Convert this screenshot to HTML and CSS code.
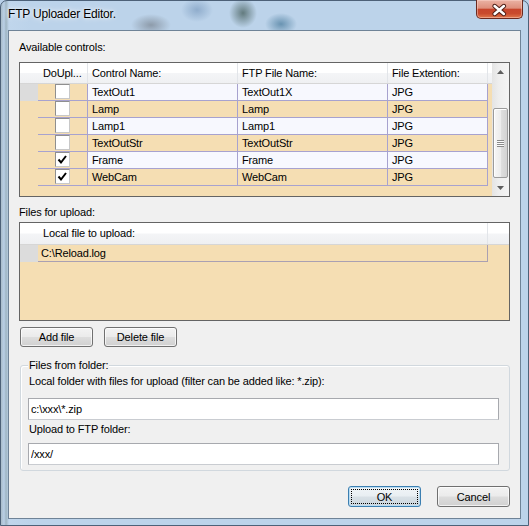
FILE: index.html
```html
<!DOCTYPE html>
<html>
<head>
<meta charset="utf-8">
<link rel="stylesheet" href="styles.css">
</head>
<body>
<div class="window">
  <div class="titlebar">
    <span class="title">FTP Uploader Editor.</span>
    <div class="close">
      <svg width="47" height="19" viewBox="0 0 47 19">
        <path d="M19 6 L28.5 14 M28.5 6 L19 14" stroke="#4b1d15" stroke-width="4.6" stroke-linecap="round"/>
        <path d="M19 6 L28.5 14 M28.5 6 L19 14" stroke="#ffffff" stroke-width="2.6" stroke-linecap="round"/>
      </svg>
    </div>
  </div>
  <div class="client">
    <div class="label lbl-top">Available controls:</div>
    <div class="grid grid1">
      <div class="grid-main">
        <div class="hdr">
          <div class="hc rh"></div>
          <div class="hc w-chk">DoUpl...</div>
          <div class="hc w-name">Control Name:</div>
          <div class="hc w-ftp">FTP File Name:</div>
          <div class="hc w-ext">File Extention:</div>
          <div class="hc fill"></div>
        </div>
        <div class="row light">
          <div class="rh cur"></div>
          <div class="cell chk w-chk"><div class="cb"></div></div>
          <div class="cell w-name">TextOut1</div>
          <div class="cell w-ftp">TextOut1X</div>
          <div class="cell w-ext">JPG</div>
        </div>
        <div class="row tan">
          <div class="rh"></div>
          <div class="cell chk w-chk"><div class="cb"></div></div>
          <div class="cell w-name">Lamp</div>
          <div class="cell w-ftp">Lamp</div>
          <div class="cell w-ext">JPG</div>
        </div>
        <div class="row light">
          <div class="rh"></div>
          <div class="cell chk w-chk"><div class="cb"></div></div>
          <div class="cell w-name">Lamp1</div>
          <div class="cell w-ftp">Lamp1</div>
          <div class="cell w-ext">JPG</div>
        </div>
        <div class="row tan">
          <div class="rh"></div>
          <div class="cell chk w-chk"><div class="cb"></div></div>
          <div class="cell w-name">TextOutStr</div>
          <div class="cell w-ftp">TextOutStr</div>
          <div class="cell w-ext">JPG</div>
        </div>
        <div class="row light">
          <div class="rh"></div>
          <div class="cell chk w-chk"><div class="cb"><svg width="13" height="13" viewBox="0 0 13 13"><path d="M2.5 6.5 L5 9.5 L10 3" fill="none" stroke="#000" stroke-width="2"/></svg></div></div>
          <div class="cell w-name">Frame</div>
          <div class="cell w-ftp">Frame</div>
          <div class="cell w-ext">JPG</div>
        </div>
        <div class="row tan">
          <div class="rh"></div>
          <div class="cell chk w-chk"><div class="cb"><svg width="13" height="13" viewBox="0 0 13 13"><path d="M2.5 6.5 L5 9.5 L10 3" fill="none" stroke="#000" stroke-width="2"/></svg></div></div>
          <div class="cell w-name">WebCam</div>
          <div class="cell w-ftp">WebCam</div>
          <div class="cell w-ext">JPG</div>
        </div>
      </div>
      <div class="vscroll">
        <div class="sb-btn"><svg width="7" height="4" viewBox="0 0 7 4"><path d="M0 4 L3.5 0 L7 4 Z" fill="#5e5e5e"/></svg></div>
        <div class="sb-track">
          <div class="thumb"><div class="grip"></div></div>
        </div>
        <div class="sb-btn"><svg width="7" height="4" viewBox="0 0 7 4"><path d="M0 0 L7 0 L3.5 4 Z" fill="#5e5e5e"/></svg></div>
      </div>
    </div>

    <div class="label lbl-files">Files for upload:</div>
    <div class="grid grid2">
      <div class="grid-main">
        <div class="hdr hdr2">
          <div class="hc rh"></div>
          <div class="hc w-file">Local file to upload:</div>
          <div class="hc fill"></div>
        </div>
        <div class="row">
          <div class="rh cur"></div>
          <div class="cell cell2 w-file">C:\Reload.log</div>
        </div>
      </div>
    </div>

    <div class="btnrow">
      <button class="btn btn-add">Add file</button>
      <button class="btn">Delete file</button>
    </div>

    <div class="group">
      <span class="legend">Files from folder:</span>
      <div class="label lbl-local">Local folder with files for upload (filter can be added like: *.zip):</div>
      <input class="tb tb1" type="text" value="c:\xxx\*.zip">
      <div class="label lbl-ftp">Upload to FTP folder:</div>
      <input class="tb tb2" type="text" value="/xxx/">
    </div>

    <div class="okrow">
      <button class="btn btn-ok">OK</button>
      <button class="btn">Cancel</button>
    </div>
  </div>
</div>
</body>
</html>
```

FILE: styles.css
```css
* { box-sizing: border-box; }

body {
  margin: 0;
  width: 529px;
  height: 526px;
  overflow: hidden;
  font-family: "Liberation Sans", Arial, sans-serif;
  font-size: 11px;
  letter-spacing: -0.14px;
  color: #000;
  background: #b9d0e8;
}

.window {
  width: 529px;
  height: 526px;
  display: flex;
  flex-direction: column;
  padding: 0 7px 6px 7px;
  border: 1px solid #4d6178;
  border-radius: 7px 7px 0 0;
  background:
    radial-gradient(ellipse 20px 11px at 150px 24px, rgba(110,118,128,0.6), rgba(110,118,128,0) 100%),
    radial-gradient(ellipse 16px 12px at 196px 9px, rgba(100,135,175,0.5), rgba(100,135,175,0) 100%),
    radial-gradient(ellipse 14px 15px at 242px 12px, rgba(60,85,80,0.7), rgba(60,85,80,0) 100%),
    radial-gradient(ellipse 16px 11px at 280px 23px, rgba(50,105,140,0.6), rgba(50,105,140,0) 100%),
    linear-gradient(90deg, #a9bcc9 0px, #b9cfe6 3px, #9fb5c3 5px, #c0d6ec 8px, #bcd3ea 30px, #bcd3ea 100%);
}

.titlebar {
  height: 29px;
  flex: none;
  display: flex;
  justify-content: space-between;
  align-items: flex-start;
}

.title {
  padding-top: 6px;
  font-size: 12px;
  letter-spacing: -0.2px;
  line-height: 15px;
  text-shadow: 0 0 6px rgba(255,255,255,0.95), 0 0 3px rgba(255,255,255,0.9);
}

.close {
  width: 47px;
  height: 19px;
  margin-top: -1px;
  margin-right: -2px;
  border: 1px solid #6b2a20;
  border-top: none;
  border-radius: 0 0 5px 5px;
  background: linear-gradient(180deg, #eab2a4 0%, #de8f7c 45%, #c7452c 52%, #c94a2d 75%, #e0774b 100%);
  box-shadow: inset 0 0 0 1px rgba(255,220,210,0.45);
  display: flex;
}

.close svg { display: block; margin-left: -1px; }

.client {
  flex: 1;
  display: flex;
  flex-direction: column;
  padding: 0 10px;
  background: #f0f0f0;
  border: 1px solid #6f8397;
}

.label {
  line-height: 13px;
  white-space: nowrap;
}

.lbl-top { margin-top: 10px; }
.lbl-files { margin-top: 9px; }

/* data grids */
.grid {
  display: flex;
  border: 1px solid #646464;
  background: #f5deb3;
  flex: none;
}

.grid1 { height: 135px; margin-top: 8px; }
.grid2 { height: 99px; margin-top: 3px; }

.grid-main {
  flex: 1;
  min-width: 0;
  display: flex;
  flex-direction: column;
}

.hdr {
  display: flex;
  height: 21px;
  flex: none;
  background: linear-gradient(180deg, #ffffff 0%, #ffffff 48%, #f4f5f7 52%, #eff0f2 100%);
  border-bottom: 1px solid #d6d6d6;
}

.hdr2 { height: 22px; }

.hc {
  flex: none;
  border-right: 1px solid #e2e5e9;
  padding-left: 4px;
  line-height: 20px;
  white-space: nowrap;
  overflow: hidden;
}

.hdr2 .hc { line-height: 21px; }

.hc.rh { border-right: none; }
.hc.fill { flex: 1; border-right: none; }
.hdr .w-chk { padding-left: 5px; }
.hdr2 .w-file { padding-left: 5px; }

.rh { width: 18px; flex: none; }
.rh.cur { background: #dcdcdc; }

.w-chk { width: 50px; }
.w-name { width: 150px; }
.w-ftp { width: 150px; }
.w-ext { width: 100px; }
.w-file { width: 450px; }

.row {
  display: flex;
  height: 17px;
  flex: none;
}

.cell {
  flex: none;
  border-right: 1px solid #a7a2cf;
  border-bottom: 1px solid #a7a2cf;
  padding-left: 4px;
  line-height: 16px;
  white-space: nowrap;
  overflow: hidden;
}

.light .cell { background: #f7f8fe; }
.tan .cell { background: #f5deb3; }

.cell.chk {
  background: #f5deb3;
  padding-left: 0;
  display: flex;
  justify-content: center;
  align-items: flex-start;
}

.cb {
  width: 15px;
  height: 15px;
  margin-right: 1px;
  background: #fff;
  border: 1px solid #8f8f8f;
  border-right-color: #c8c8c8;
  border-bottom-color: #c8c8c8;
  display: flex;
  align-items: center;
  justify-content: center;
}

.cb svg { display: block; }

.cell2 {
  background: #f5deb3;
  border-color: #aaa0b2;
  padding-left: 3px;
}

/* scrollbar */
.vscroll {
  width: 17px;
  flex: none;
  display: flex;
  flex-direction: column;
  background: linear-gradient(90deg, #e4e4e4 0%, #eeeeee 40%, #f4f4f4 100%);
}

.sb-btn {
  height: 17px;
  flex: none;
  display: flex;
  align-items: center;
  justify-content: center;
}

.sb-btn svg { display: block; }

.sb-track { flex: 1; }

.thumb {
  margin: 28px 1px 0 1px;
  height: 70px;
  border: 1px solid #9b9b9b;
  border-radius: 2px;
  background: linear-gradient(90deg, #f7f7f7 0%, #ececec 50%, #dedede 55%, #d2d2d2 100%);
  box-shadow: inset 1px 1px 0 #ffffff;
  display: flex;
  align-items: center;
  justify-content: center;
}

.grip {
  width: 7px;
  height: 7px;
  background: repeating-linear-gradient(180deg, #8a8a8a 0 1px, #fbfbfb 1px 2px);
}

/* buttons */
.btn {
  height: 20px;
  width: 73px;
  padding: 0;
  font-family: "Liberation Sans", Arial, sans-serif;
  font-size: 11px;
  letter-spacing: -0.14px;
  color: #000;
  border: 1px solid #707070;
  border-radius: 3px;
  background: linear-gradient(180deg, #f3f3f3 0%, #ebebeb 48%, #dddddd 52%, #d0d0d0 100%);
  box-shadow: inset 0 0 0 1px rgba(255,255,255,0.7);
}

.btnrow {
  display: flex;
  gap: 11px;
  margin-top: 6px;
  flex: none;
}

.btn-add { margin-left: 1px; }

/* group box */
.group {
  margin-top: 18px;
  margin-left: 1px;
  padding: 0 10px 5px 8px;
  border: 1px solid #d1d8de;
  border-radius: 3px;
  box-shadow: inset 1px 1px 0 #ffffff;
  display: flex;
  flex-direction: column;
  flex: none;
}

.legend {
  display: block;
  width: max-content;
  margin-top: -7px;
  margin-left: -1px;
  padding: 0 1px;
  line-height: 13px;
  background: #f0f0f0;
}

.lbl-local { margin-top: 3px; }
.lbl-ftp { margin-top: 3px; }

.tb {
  display: block;
  height: 22px;
  margin: 0 0 0 -1px;
  padding: 0 2px;
  border: 1px solid #a7a9ae;
  border-bottom-color: #c9ccd1;
  background: #fff;
  font-family: "Liberation Sans", Arial, sans-serif;
  font-size: 11px;
  letter-spacing: -0.14px;
  color: #000;
  outline: none;
}

.tb1 { margin-top: 10px; }
.tb2 { margin-top: 7px; }

.okrow {
  display: flex;
  justify-content: flex-end;
  gap: 16px;
  margin-top: 15px;
  flex: none;
}

.okrow .btn { height: 21px; }

.btn-ok {
  width: 73px;
  border-color: #3c7fb1;
  box-shadow: inset 0 0 0 1px #b9dcf2;
  background: linear-gradient(180deg, #f1f5f8 0%, #e8eef2 48%, #d9e1e7 52%, #ccd6dd 100%);
  outline: 1px dotted #000;
  outline-offset: -4px;
}
```
